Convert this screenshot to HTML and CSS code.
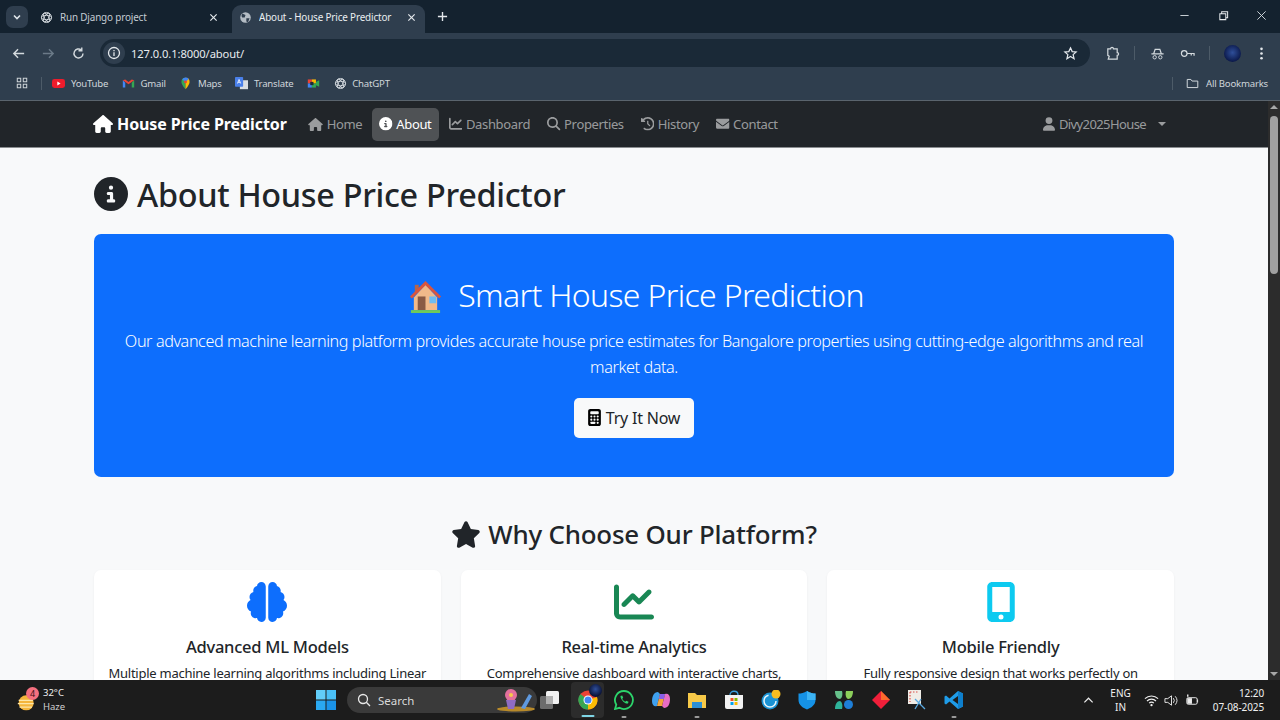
FILE: index.html
```html
<!DOCTYPE html>
<html lang="en">
<head>
<meta charset="utf-8">
<title>About - House Price Predictor</title>
<link rel="stylesheet" href="styles.css">
</head>
<body>
<svg class="sprite" aria-hidden="true">
<symbol id="i-house" viewBox="0 0 576 512"><path d="M575.8 255.5c0 18-15 32.1-32 32.1h-32l.7 160.2c0 2.7-.2 5.4-.5 8.1V472c0 22.1-17.9 40-40 40H456c-1.1 0-2.2 0-3.3-.1c-1.4 .1-2.8 .1-4.2 .1H416 392c-22.1 0-40-17.9-40-40V448 384c0-17.7-14.3-32-32-32H256c-17.7 0-32 14.3-32 32v64 24c0 22.1-17.9 40-40 40H160 128.1c-1.5 0-3-.1-4.5-.2c-1.2 .1-2.4 .2-3.6 .2H104c-22.1 0-40-17.9-40-40V360c0-.9 0-1.9 .1-2.8V287.6H32c-18 0-32-14-32-32.1c0-9 3-17 10-24L266.4 8c7-7 15-8 22-8s15 2 21 7L564.8 231.5c8 7 12 15 11 24z"/></symbol>
<symbol id="i-info" viewBox="0 0 512 512"><path d="M256 512A256 256 0 1 0 256 0a256 256 0 1 0 0 512zM216 336h24V272H216c-13.3 0-24-10.7-24-24s10.7-24 24-24h48c13.3 0 24 10.7 24 24v88h8c13.3 0 24 10.7 24 24s-10.7 24-24 24H216c-13.3 0-24-10.7-24-24s10.7-24 24-24zm40-208a32 32 0 1 1 0 64 32 32 0 1 1 0-64z"/></symbol>
<symbol id="i-chart" viewBox="0 0 512 512"><path d="M64 64c0-17.7-14.3-32-32-32S0 46.3 0 64V400c0 44.2 35.8 80 80 80H480c17.7 0 32-14.3 32-32s-14.3-32-32-32H80c-8.8 0-16-7.2-16-16V64zm406.6 86.6c12.5-12.5 12.5-32.8 0-45.3s-32.8-12.5-45.3 0L320 210.7l-57.4-57.4c-12.5-12.5-32.8-12.5-45.3 0l-112 112c-12.5 12.5-12.5 32.8 0 45.3s32.8 12.5 45.3 0L240 221.3l57.4 57.4c12.5 12.5 32.8 12.5 45.3 0l128-128z"/></symbol>
<symbol id="i-search" viewBox="0 0 512 512"><path d="M416 208c0 45.9-14.9 88.3-40 122.7L502.6 457.4c12.5 12.5 12.5 32.8 0 45.3s-32.8 12.5-45.3 0L330.7 376c-34.4 25.2-76.8 40-122.7 40C93.1 416 0 322.9 0 208S93.1 0 208 0S416 93.1 416 208zM208 352a144 144 0 1 0 0-288 144 144 0 1 0 0 288z"/></symbol>
<symbol id="i-history" viewBox="0 0 512 512"><path d="M75 75L41 41C25.9 25.9 0 36.6 0 57.9V168c0 13.3 10.7 24 24 24H134.1c21.4 0 32.1-25.9 17-41l-30.8-30.8C155 85.5 203 64 256 64c106 0 192 86 192 192s-86 192-192 192c-40.8 0-78.6-12.7-109.7-34.4c-14.5-10.1-34.4-6.6-44.6 7.9s-6.6 34.4 7.9 44.6C151.2 495 201.7 512 256 512c141.4 0 256-114.6 256-256S397.4 0 256 0C185.3 0 121.3 28.7 75 75zm181 53c-13.3 0-24 10.7-24 24V256c0 6.4 2.5 12.5 7 17l72 72c9.4 9.4 24.6 9.4 33.9 0s9.4-24.6 0-33.9l-65-65V152c0-13.3-10.7-24-24-24z"/></symbol>
<symbol id="i-mail" viewBox="0 0 512 512"><path d="M48 64C21.5 64 0 85.5 0 112c0 15.1 7.1 29.3 19.2 38.4L236.8 313.6c11.4 8.5 27 8.5 38.4 0L492.8 150.4c12.1-9.1 19.2-23.3 19.2-38.4c0-26.5-21.5-48-48-48H48zM0 176V384c0 35.3 28.7 64 64 64H448c35.3 0 64-28.7 64-64V176L294.4 339.2c-22.8 17.1-53.9 17.1-76.8 0L0 176z"/></symbol>
<symbol id="i-user" viewBox="0 0 448 512"><path d="M224 256A128 128 0 1 0 224 0a128 128 0 1 0 0 256zm-45.7 48C79.8 304 0 383.8 0 482.3C0 498.7 13.3 512 29.7 512H418.3c16.4 0 29.7-13.3 29.7-29.7C448 383.8 368.2 304 269.7 304H178.3z"/></symbol>
<symbol id="i-star" viewBox="0 0 576 512"><path d="M316.9 18C311.6 7 300.4 0 288.1 0s-23.4 7-28.8 18L195 150.3 51.4 171.5c-12 1.8-22 10.2-25.7 21.7s-.7 24.2 7.9 32.7L137.8 329 113.2 474.7c-2 12 3 24.2 12.9 31.3s23 8 33.8 2.3l128.3-68.5 128.3 68.5c10.8 5.7 23.9 4.9 33.8-2.3s14.9-19.3 12.9-31.3L438.5 329 542.7 225.9c8.6-8.5 11.7-21.2 7.9-32.7s-13.7-19.9-25.7-21.7L381.2 150.3 316.9 18z"/></symbol>
<symbol id="i-calc" viewBox="0 0 384 512"><path d="M64 0C28.7 0 0 28.7 0 64V448c0 35.3 28.7 64 64 64H320c35.3 0 64-28.7 64-64V64c0-35.3-28.7-64-64-64H64zM96 64H288c17.7 0 32 14.3 32 32v32c0 17.7-14.3 32-32 32H96c-17.7 0-32-14.3-32-32V96c0-17.7 14.3-32 32-32zm32 160a32 32 0 1 1 -64 0 32 32 0 1 1 64 0zM96 352a32 32 0 1 1 0-64 32 32 0 1 1 0 64zM64 416c0-17.7 14.3-32 32-32h96c17.7 0 32 14.3 32 32s-14.3 32-32 32H96c-17.7 0-32-14.3-32-32zM192 256a32 32 0 1 1 0-64 32 32 0 1 1 0 64zm32 64a32 32 0 1 1 -64 0 32 32 0 1 1 64 0zm64-64a32 32 0 1 1 0-64 32 32 0 1 1 0 64zm32 64a32 32 0 1 1 -64 0 32 32 0 1 1 64 0zM288 448a32 32 0 1 1 0-64 32 32 0 1 1 0 64z"/></symbol>
<symbol id="i-brain" viewBox="0 0 512 512"><path d="M184 0c30.9 0 56 25.1 56 56V456c0 30.9-25.1 56-56 56c-28.9 0-52.7-21.9-55.7-50.1c-5.2 1.4-10.7 2.1-16.3 2.1c-35.3 0-64-28.7-64-64c0-7.4 1.3-14.6 3.6-21.2C21.4 367.4 0 338.2 0 304c0-31.9 18.7-59.5 45.8-72.3C37.1 220.8 32 207 32 192c0-30.7 21.6-56.3 50.4-62.6C80.8 123.9 80 118 80 112c0-29.9 20.6-55.1 48.3-62.1C131.3 21.9 155.1 0 184 0zM328 0c28.9 0 52.6 21.9 55.7 49.9c27.8 7 48.3 32.1 48.3 62.1c0 6-.8 11.9-2.4 17.4c28.8 6.2 50.4 31.9 50.4 62.6c0 15-5.1 28.8-13.8 39.7C493.3 244.5 512 272.1 512 304c0 34.2-21.4 63.4-51.6 74.8c2.3 6.6 3.6 13.8 3.6 21.2c0 35.3-28.7 64-64 64c-5.6 0-11.1-.7-16.3-2.1c-3 28.2-26.8 50.1-55.7 50.1c-30.9 0-56-25.1-56-56V56c0-30.9 25.1-56 56-56z"/></symbol>
<symbol id="i-mobile" viewBox="0 0 384 512"><path d="M16 64C16 28.7 44.7 0 80 0H304c35.3 0 64 28.7 64 64V448c0 35.3-28.7 64-64 64H80c-35.3 0-64-28.7-64-64V64zM224 448a32 32 0 1 0 -64 0 32 32 0 1 0 64 0zM304 64H80V384H304V64z"/></symbol>
<symbol id="i-gpt" viewBox="0 0 16 16"><g fill="none" stroke="currentColor" stroke-width="1.1"><circle cx="8" cy="8" r="6.2"/><ellipse cx="8" cy="8" rx="6.2" ry="2.6" transform="rotate(60 8 8)"/><ellipse cx="8" cy="8" rx="6.2" ry="2.6" transform="rotate(-60 8 8)"/><ellipse cx="8" cy="8" rx="6.2" ry="2.6"/></g></symbol>
</svg>

<div class="browser">
  <div class="tabstrip">
    <div class="tab-search"><svg class="ic10" viewBox="0 0 10 10"><path d="M2 3.500 5 6.500 8 3.500" fill="none" stroke="#dfe5ea" stroke-width="1.600"/></svg></div>
    <div class="tab tab-first">
      <svg class="fav"><use href="#i-gpt"/></svg>
      <span class="tab-title">Run Django project</span>
      <svg class="close" viewBox="0 0 10 10"><path d="M1.500 1.500 8.500 8.500M8.500 1.500 1.500 8.500" stroke="currentColor" stroke-width="1.300"/></svg>
    </div>
    <div class="tab tab-active">
      <svg class="fav" viewBox="0 0 16 16"><circle cx="8" cy="8" r="6.500" fill="#b4bcc4"/><path d="M4 3 8 5 7 8 4 8 3 6ZM9 9 13 9 11 14 9 13Z" fill="#2f3e4e"/></svg>
      <span class="tab-title">About - House Price Predictor</span>
      <svg class="close" viewBox="0 0 10 10"><path d="M1.500 1.500 8.500 8.500M8.500 1.500 1.500 8.500" stroke="currentColor" stroke-width="1.300"/></svg>
    </div>
    <svg class="plus" viewBox="0 0 12 12"><path d="M6 1V11M1 6H11" stroke="#e4e8ec" stroke-width="1.500"/></svg>
    <div class="winctl">
      <svg viewBox="0 0 12 12"><path d="M1.500 6H10.500" stroke="#d8dde2"/></svg>
      <svg viewBox="0 0 12 12"><path d="M2 4H8.500V10.500H2ZM4 4V2H10.500V8.500H8.500" fill="none" stroke="#e8ecef" stroke-width="1.100"/></svg>
      <svg viewBox="0 0 12 12"><path d="M1.500 1.500 10.500 10.500M10.500 1.500 1.500 10.500" stroke="#d8dde2"/></svg>
    </div>
  </div>
  <div class="toolbar">
    <div class="navrow">
      <svg class="tb" viewBox="0 0 16 16"><path d="M14 8H3M7.500 3.500 3 8 7.500 12.500" fill="none" stroke="#d4dade" stroke-width="1.500"/></svg>
      <svg class="tb" viewBox="0 0 16 16"><path d="M2 8H13M8.500 3.500 13 8 8.500 12.500" fill="none" stroke="#6b7a88" stroke-width="1.500"/></svg>
      <svg class="tb" viewBox="0 0 16 16"><path d="M12.800 8A4.800 4.800 0 1 1 11 4.200M11.500 1.500V5H8" fill="none" stroke="#d4dade" stroke-width="1.500"/></svg>
      <div class="omnibox">
        <span class="omni-info"><svg class="ic14" viewBox="0 0 14 14"><circle cx="7" cy="7" r="5.500" fill="none" stroke="#e4e8ec" stroke-width="1.300"/><path d="M7 6.200V10M7 4V5.200" stroke="#e4e8ec" stroke-width="1.300"/></svg></span>
        <span class="url">127.0.0.1:8000/about/</span>
        <svg class="omni-star" viewBox="0 0 16 16"><path d="M8 2 9.800 6 14 6.400 10.800 9.200 11.800 13.500 8 11.200 4.200 13.500 5.200 9.200 2 6.400 6.200 6Z" fill="none" stroke="#e4e8ec" stroke-width="1.300"/></svg>
      </div>
      <svg class="tb" viewBox="0 0 16 16"><path d="M3 3H6C6 1 9 1 9 3H13V7C15 7 15 10 13 10V14H3.500L4.500 11 3 10V7Z" fill="none" stroke="#d4dade" stroke-width="1.300"/></svg>
      <span class="tb-sep"></span>
      <svg class="tb" viewBox="0 0 16 16"><path d="M1.500 8.500H14.500M4 8 5.500 3.500H10.500L12 8" fill="none" stroke="#d4dade" stroke-width="1.300"/><circle cx="5" cy="12" r="1.800" fill="none" stroke="#d4dade"/><circle cx="11" cy="12" r="1.800" fill="none" stroke="#d4dade"/></svg>
      <svg class="tb" viewBox="0 0 16 16"><circle cx="4.500" cy="8" r="3" fill="none" stroke="#d4dade" stroke-width="1.300"/><path d="M7.500 8H15V10.500M12 8V10" fill="none" stroke="#d4dade" stroke-width="1.300"/></svg>
      <span class="tb-sep"></span>
      <span class="avatar"></span>
      <svg class="tb" viewBox="0 0 16 16"><g fill="#e4e8ec"><circle cx="8" cy="3" r="1.400"/><circle cx="8" cy="8" r="1.400"/><circle cx="8" cy="13" r="1.400"/></g></svg>
    </div>
    <div class="bookmarks">
      <svg class="apps" viewBox="0 0 14 14"><path d="M1.500 1.500H5.500V5.500H1.500ZM8.500 1.500H12.500V5.500H8.500ZM1.500 8.500H5.500V12.500H1.500ZM8.500 8.500H12.500V12.500H8.500Z" fill="none" stroke="#cdd3d8" stroke-width="1.200"/></svg>
      <span class="bm-sep"></span>
      <span class="bm"><svg class="bm-ic" viewBox="0 0 16 16"><rect y="2.500" width="16" height="11" rx="3" fill="#ee1c2c"/><path d="M6.500 5.500 10.500 8 6.500 10.500Z" fill="#fff"/></svg>YouTube</span>
      <span class="bm"><svg class="bm-ic" viewBox="0 0 16 16"><path d="M1 4V13H4V7Z" fill="#4285f4"/><path d="M15 4V13H12V7Z" fill="#34a853"/><path d="M1 4 8 9 15 4 12 3 8 6 4 3Z" fill="#ea4335"/></svg>Gmail</span>
      <span class="bm"><svg class="bm-ic" viewBox="0 0 16 16"><path d="M8 1A5 5 0 0 0 3 6C3 9.500 8 15 8 15Z" fill="#34a853"/><path d="M8 1A5 5 0 0 1 13 6C13 9.500 8 15 8 15Z" fill="#fbbc04"/><path d="M4 3A5 5 0 0 1 12 2.500L8 6Z" fill="#4285f4"/><circle cx="8" cy="6" r="1.800" fill="#ea4335"/></svg>Maps</span>
      <span class="bm"><svg class="bm-ic" viewBox="0 0 16 16"><rect x="6" y="4" width="10" height="11" fill="#d9dde2"/><rect width="10" height="12" rx="1" fill="#4a80ea"/><path d="M3 8 5 3 7 8M3.800 6.500H6.200" fill="none" stroke="#fff"/></svg>Translate</span>
      <span class="bm"><svg class="bm-ic" viewBox="0 0 16 16"><rect x="1" y="3" width="5" height="5" fill="#ea4335"/><rect x="6" y="3" width="5" height="5" fill="#fbbc04"/><rect x="1" y="8" width="5" height="5" fill="#4285f4"/><rect x="6" y="8" width="5" height="5" fill="#34a853"/><rect x="4" y="6" width="4" height="4" fill="#1d2a36"/><path d="M11 6 15 4V12L11 10Z" fill="#34a853"/></svg></span>
      <span class="bm"><svg class="bm-ic gpt"><use href="#i-gpt"/></svg>ChatGPT</span>
      <span class="bm-end"><span class="bm-sep"></span><svg class="bm-ic" viewBox="0 0 16 16"><path d="M1.500 3H6L7.500 5H14.500V13H1.500Z" fill="none" stroke="#d4dade" stroke-width="1.200"/></svg>All Bookmarks</span>
    </div>
  </div>

  <div class="viewport">
    <div class="page">
      <nav class="navbar">
        <a class="brand"><svg class="brand-ic"><use href="#i-house"/></svg>House Price Predictor</a>
        <ul class="navlinks">
          <li class="navlink"><svg class="ni"><use href="#i-house"/></svg>Home</li>
          <li class="navlink is-active"><svg class="ni ni-sq"><use href="#i-info"/></svg>About</li>
          <li class="navlink"><svg class="ni ni-sq"><use href="#i-chart"/></svg>Dashboard</li>
          <li class="navlink"><svg class="ni ni-sq"><use href="#i-search"/></svg>Properties</li>
          <li class="navlink"><svg class="ni ni-sq"><use href="#i-history"/></svg>History</li>
          <li class="navlink"><svg class="ni ni-sq"><use href="#i-mail"/></svg>Contact</li>
        </ul>
        <div class="navuser"><svg class="ni ni-user"><use href="#i-user"/></svg>Divy2025House<span class="caret"></span></div>
      </nav>
      <main class="content">
        <h1 class="title"><svg class="title-ic"><use href="#i-info"/></svg>About House Price Predictor</h1>
        <section class="hero">
          <h2 class="hero-title"><svg class="emoji" viewBox="0 0 36 36"><path d="M7 7H11V15H7Z" fill="#b5654a"/><path d="M6 20 18 7 30 20V33H6Z" fill="#f1b98a"/><path d="M2 19 18 3 34 19 32 21 18 7.500 4 21Z" fill="#d9553f"/><path d="M10 19H18V33H10Z" fill="#8a5a44"/><path d="M22 19H29V26H22Z" fill="#6dbcf2"/><path d="M3 33H33V36H3Z" fill="#6fca5a"/></svg>Smart House Price Prediction</h2>
          <p class="hero-text">Our advanced machine learning platform provides accurate house price estimates for Bangalore properties using cutting-edge algorithms and real market data.</p>
          <a class="hero-btn"><svg class="btn-ic"><use href="#i-calc"/></svg>Try It Now</a>
        </section>
        <h2 class="why"><svg class="why-ic"><use href="#i-star"/></svg>Why Choose Our Platform?</h2>
        <div class="cards">
          <article class="card"><svg class="card-ic blue"><use href="#i-brain"/></svg><h3 class="card-title">Advanced ML Models</h3><p class="card-text">Multiple machine learning algorithms including Linear</p></article>
          <article class="card"><svg class="card-ic green"><use href="#i-chart"/></svg><h3 class="card-title">Real-time Analytics</h3><p class="card-text">Comprehensive dashboard with interactive charts,</p></article>
          <article class="card"><svg class="card-ic cyan"><use href="#i-mobile"/></svg><h3 class="card-title">Mobile Friendly</h3><p class="card-text">Fully responsive design that works perfectly on</p></article>
        </div>
      </main>
    </div>
    <div class="scrollbar">
      <span class="sb-up"></span>
      <span class="sb-thumb"></span>
      <span class="sb-down"></span>
    </div>
  </div>

  <footer class="taskbar">
    <div class="weather">
      <span class="w-ic"><svg viewBox="0 0 24 24" class="w-sun"><circle cx="11" cy="13" r="9" fill="#f5b53a"/><path d="M2 10H19M1 14H20M3 18H18" stroke="#fde6a8" stroke-width="1.500"/></svg><span class="w-badge">4</span></span>
      <span class="w-text"><span>32°C</span><span class="w-sub">Haze</span></span>
    </div>
    <div class="tb-center">
      <svg class="tk" viewBox="0 0 20 20"><rect x="0" y="0" width="9.500" height="9.500" fill="#62cdf9"/><rect x="10.500" y="0" width="9.500" height="9.500" fill="#4ac0f7"/><rect x="0" y="10.500" width="9.500" height="9.500" fill="#2aa8f0"/><rect x="10.500" y="10.500" width="9.500" height="9.500" fill="#1a93e8"/></svg>
      <div class="tk-search">
        <svg class="ic14" viewBox="0 0 14 14"><circle cx="6" cy="6" r="4.500" fill="none" stroke="#e8e8e8" stroke-width="1.300"/><path d="M9.300 9.300 13 13" stroke="#e8e8e8" stroke-width="1.300"/></svg>
        <span>Search</span>
        <svg class="tk-art" viewBox="0 0 38 24"><ellipse cx="19" cy="21" rx="19" ry="2.500" fill="#b88a2a"/><circle cx="14" cy="7" r="6" fill="#e36f9c"/><circle cx="14" cy="7" r="2" fill="#f7c94a"/><path d="M9 12H19L17 21H11Z" fill="#8f6cc4"/><path d="M24 20 32 6 35 8 28 21Z" fill="#5f9ae0"/></svg>
      </div>
      <svg class="tk tk-view" viewBox="0 0 20 20"><rect x="0" y="6" width="13" height="13" rx="1.500" fill="#6c6c6c"/><rect x="6" y="1" width="13" height="13" rx="1.500" fill="#f1f1f1"/><rect x="6" y="6" width="7" height="8" fill="#b0b0b0"/></svg>
      <span class="tk-slot is-open">
        <svg class="tk" viewBox="0 0 20 20"><circle cx="10" cy="10" r="9.500" fill="#ea4335"/><path d="M10 10 1.800 15A9.500 9.500 0 0 1 2.500 4Z" fill="#34a853"/><path d="M10 10V19.500A9.500 9.500 0 0 1 1.800 15Z" fill="#34a853"/><path d="M10 10 19 7A9.500 9.500 0 0 1 10 19.500Z" fill="#fbbc04"/><circle cx="10" cy="10" r="4.500" fill="#fff"/><circle cx="10" cy="10" r="3.500" fill="#4285f4"/></svg>
        <span class="tk-avatar"></span>
      </span>
      <span class="tk-slot has-dot"><svg class="tk" viewBox="0 0 20 20"><path d="M10 1A9 9 0 0 0 2.300 14.700L1 19 5.400 17.800A9 9 0 1 0 10 1Z" fill="none" stroke="#2cd46b" stroke-width="1.800"/><path d="M6.500 6C6 9 11 14.500 14 13.500L14.500 11.800 12.300 10.700 11.300 11.800C10 11.200 8.800 10 8.200 8.700L9.200 7.700 8.200 5.500Z" fill="#2cd46b"/></svg></span>
      <span class="tk-slot"><svg class="tk" viewBox="0 0 20 20"><path d="M7 2C3 2 1 6 1 11C1 15 3 17 6 16L9 4Z" fill="#3fa0ee"/><path d="M13 18C17 18 19 14 19 9C19 5 17 3 14 4L11 16Z" fill="#e86cc4"/><path d="M6 16 9 4 14 4 11 16Z" fill="#f3a33a"/><path d="M9 4 14 4 13 9 8 9Z" fill="#8a5de8"/></svg></span>
      <span class="tk-slot has-dot"><svg class="tk" viewBox="0 0 20 20"><path d="M1 3H8L10 5H19V18H1Z" fill="#f7c948"/><rect x="5" y="12" width="10" height="6" fill="#2c8fd6"/></svg></span>
      <span class="tk-slot"><svg class="tk" viewBox="0 0 20 20"><path d="M1 5H19V17A2 2 0 0 1 17 19H3A2 2 0 0 1 1 17Z" fill="#f2f2f2"/><path d="M6 5C6 0 14 0 14 5" fill="none" stroke="#3aa0e0" stroke-width="1.300"/><rect x="6.500" y="8" width="3" height="3" fill="#f25022"/><rect x="10.500" y="8" width="3" height="3" fill="#7fba00"/><rect x="6.500" y="12" width="3" height="3" fill="#00a4ef"/><rect x="10.500" y="12" width="3" height="3" fill="#ffb900"/></svg></span>
      <span class="tk-slot"><svg class="tk" viewBox="0 0 20 20"><circle cx="9" cy="11" r="8.500" fill="#1b93d4"/><circle cx="9" cy="11" r="6" fill="none" stroke="#e8f6fd" stroke-width="1.500" stroke-dasharray="26 12"/><circle cx="15" cy="4" r="4.500" fill="#f5bd1f"/></svg></span>
      <span class="tk-slot"><svg class="tk" viewBox="0 0 20 20"><path d="M10 1C7 3 4 3.500 1.500 3.500V10C1.500 15 6 18 10 19.500C14 18 18.500 15 18.500 10V3.500C16 3.500 13 3 10 1Z" fill="#1592e6"/><path d="M10 1V10H18.500V3.500C16 3.500 13 3 10 1Z" fill="#3cb4f5"/></svg></span>
      <span class="tk-slot"><svg class="tk" viewBox="0 0 20 20"><path d="M1 1H8C9 5 8 8 6 9 3 9 1 6 1 1Z" fill="#66c08a"/><path d="M19 1H12C11 5 12 8 14 9 17 9 19 6 19 1Z" fill="#8ccf5b"/><path d="M1 19H8C9 15 8 12 6 11 3 11 1 14 1 19Z" fill="#2fb39a"/><circle cx="14.500" cy="14.500" r="4.500" fill="#1e7fd8"/></svg></span>
      <span class="tk-slot"><svg class="tk" viewBox="0 0 20 20"><path d="M10 1 19 10 10 19 1 10Z" fill="#f01f3a"/><path d="M10 1 19 10 10 10Z" fill="#fb6a2c"/></svg></span>
      <span class="tk-slot"><svg class="tk" viewBox="0 0 20 20"><rect x="1" y="0" width="13" height="14" fill="#f0ece6"/><path d="M3 2H12M3 2V12" stroke="#d9534f" stroke-width="1.200" stroke-dasharray="1.500 1.500"/><path d="M8 9 18 19M14 9 8 19" stroke="#58a8e0" stroke-width="1.300"/></svg></span>
      <span class="tk-slot has-dot"><svg class="tk" viewBox="0 0 20 20"><path d="M14 1 19 3.500V16.500L14 19 5.500 11.500 2 14.500 0.500 13.500V6.500L2 5.500 5.500 8.500Z" fill="#1f9ce8"/><path d="M14 6 8.500 10 14 14Z" fill="#1c1c1c"/><path d="M14 1 19 3.500V16.500L14 19Z" fill="#0e7fcc"/></svg></span>
    </div>
    <div class="tray">
      <svg class="tr-chev" viewBox="0 0 12 12"><path d="M1.500 8 6 3.500 10.500 8" fill="none" stroke="#ececec" stroke-width="1.300"/></svg>
      <span class="lang"><span>ENG</span><span>IN</span></span>
      <svg class="tr-ic" viewBox="0 0 16 16"><path d="M1 6A10 10 0 0 1 15 6M3.200 8.500A7 7 0 0 1 12.800 8.500M5.500 10.800A3.500 3.500 0 0 1 10.500 10.800" fill="none" stroke="#f0f0f0" stroke-width="1.200"/><circle cx="8" cy="13" r="1.200" fill="#f0f0f0"/></svg>
      <svg class="tr-ic" viewBox="0 0 16 16"><path d="M1 6H4L8 3V13L4 10H1Z" fill="none" stroke="#ececec"/><path d="M10 5.500A4 4 0 0 1 10 10.500M12 3.500A7 7 0 0 1 12 12.500" fill="none" stroke="#ececec"/></svg>
      <svg class="tr-ic" viewBox="0 0 16 16"><rect x="3" y="5" width="11" height="7" rx="1.500" fill="none" stroke="#ececec"/><rect x="3.500" y="5.500" width="5" height="6" fill="#ececec"/><path d="M14.500 7V10" stroke="#ececec"/><path d="M4 1.500V4" stroke="#ececec" stroke-width="1.500"/></svg>
      <span class="clock"><span>12:20</span><span>07-08-2025</span></span>
    </div>
  </footer>
</div>
</body>
</html>
```
FILE: styles.css
```css
* { box-sizing: border-box; }
html, body { margin: 0; height: 100%; overflow: hidden; }
body { font-family: "Noto Sans", "Open Sans", "Liberation Sans", sans-serif; color: #212529; background: #1c1c1c; }
a { text-decoration: none; color: inherit; }
h1, h2, h3, p, ul { margin: 0; padding: 0; list-style: none; }
svg { display: block; flex: none; fill: currentColor; }
.sprite { width: 0; height: 0; position: absolute; }

.browser { height: 720px; display: flex; flex-direction: column; }
.ic10 { width: 10px; height: 10px; }
.ic14 { width: 14px; height: 14px; }

.tabstrip { height: 33px; background: #14222f; display: flex; align-items: flex-end; padding-left: 6px; color: #dfe5ea; flex: none; }
.tab-search { width: 22px; height: 22px; margin-bottom: 5px; background: #2f3e4e; border-radius: 7px; display: flex; align-items: center; justify-content: center; }
.tab { width: 193px; height: 28px; display: flex; align-items: center; padding: 0 9px 4px 7px; border-radius: 9px 9px 0 0; font-size: 9.900px; letter-spacing: -.15px; color: #c4ccd3; }
.tab-first { margin-left: 6px; width: 198px; padding: 0 14px 4px 6px; }
.tab-active { background: #2f3e4e; color: #eaeef1; }
.fav { width: 13px; height: 13px; margin-right: 7px; color: #d7dce1; }
.tab-title { flex: 1; white-space: nowrap; overflow: hidden; }
.close { width: 9px; height: 9px; color: #e4e8ec; }
.plus { width: 11px; height: 11px; margin: 0 0 11px 11.500px; }
.winctl { margin-left: auto; display: flex; gap: 27.500px; padding-right: 13px; align-self: stretch; align-items: center; margin-top: -2px; }
.winctl svg { width: 11px; height: 11px; }

.toolbar { height: 68px; background: #2f3e4e; border-bottom: 1px solid #5a646d; flex: none; }
.navrow { height: 34px; display: flex; align-items: center; padding: 6px 0 0 11px; gap: 15px; }
.tb { width: 15px; height: 15px; }
.omnibox { width: 990px; height: 28px; margin-left: -1px; background: #1a2937; border-radius: 14px; display: flex; align-items: center; padding: 0 12px 0 3px; color: #e8ecef; font-size: 11.200px; flex: none; }
.omni-info { width: 22px; height: 22px; background: #2f3e4e; border-radius: 50%; display: flex; align-items: center; justify-content: center; }
.url { margin-left: 6px; flex: 1; letter-spacing: -.1px; }
.omni-star { width: 15px; height: 15px; }
.tb-sep { width: 1px; height: 14px; background: #4d5b68; margin-left: -1px; }
.avatar { width: 17px; height: 17px; border-radius: 50%; background: radial-gradient(circle at 50% 45%, #2f4f9a, #0c1a4c 70%); margin: 0 -2px 0 -1px; }

.bookmarks { height: 33px; padding: 0 12px 1px 16px; display: flex; align-items: center; font-size: 9.600px; letter-spacing: -.2px; color: #d0d6db; gap: 13.700px; }
.apps { width: 12px; height: 12px; }
.apps + .bm-sep { margin-left: -1px; margin-right: -3px; }
.bm-sep { width: 1px; height: 13px; background: #4d5b68; }
.bm { display: flex; align-items: center; gap: 5.500px; white-space: nowrap; }
.bm-ic { width: 13px; height: 13px; }
.gpt { color: #d7dce1; }
.bm-end { margin-left: auto; display: flex; align-items: center; gap: 7px; }
.bm-end .bm-sep { margin-right: 6px; }

.viewport { flex: 1; display: flex; min-height: 0; background: #f8f9fa; }
.page { flex: 1; min-width: 0; overflow: hidden; }

.navbar { height: 47px; background: #212529; border-bottom: 1px solid #8a8d90; display: flex; align-items: center; padding: 0 94px 0 93px; color: rgba(255, 255, 255, .55); font-size: 13px; letter-spacing: -.35px; }
.brand { display: flex; align-items: center; font-size: 16px; font-weight: 700; color: #fff; margin-right: 14px; white-space: nowrap; letter-spacing: -.1px; }
.brand-ic { width: 20px; height: 18px; margin-right: 4px; color: #fff; }
.navlinks { display: flex; align-items: center; }
.navlink { display: flex; align-items: center; height: 33px; padding: 0 7px; margin-right: 3px; border-radius: 5px; white-space: nowrap; }
.is-active { background: #4f5255; color: #fff; padding: 0 7.500px 0 7px; }
.ni { width: 15px; height: 13px; margin-right: 4px; }
.ni-sq { width: 13.500px; height: 13.500px; margin-right: 3.500px; }
.ni-user { width: 12px; height: 14px; margin-right: 4px; }
.navuser { margin-left: auto; display: flex; align-items: center; white-space: nowrap; margin-right: 8px; letter-spacing: -.6px; }
.caret { width: 0; height: 0; margin-left: 12px; border: 4.500px solid transparent; border-top-color: currentColor; border-bottom: 0; }

.content { padding: 26px 94px 0; }
.title { display: flex; align-items: center; font-size: 32.400px; font-weight: 500; line-height: 40px; margin-bottom: 20px; letter-spacing: -.3px; }
.title-ic { width: 34px; height: 34px; margin-right: 9px; }
.hero { height: 243px; background: #0d6efd; border-radius: 7px; color: #fff; text-align: center; padding: 39px 24px 0; margin-bottom: 39px; }
.hero-title { display: flex; align-items: center; justify-content: center; padding-left: 4px; font-size: 32px; font-weight: 300; line-height: 44px; letter-spacing: -.65px; }
.emoji { width: 35px; height: 35px; margin-right: 15px; }
.hero-text { font-size: 16.200px; font-weight: 300; line-height: 26px; margin-top: 11px; letter-spacing: -.41px; }
.hero-btn { display: inline-flex; align-items: center; height: 39.500px; padding: 0 13.500px; margin-top: 18px; background: #f8f9fa; color: #212529; border-radius: 5px; font-size: 16px; letter-spacing: -.2px; }
.btn-ic { width: 13px; height: 17px; margin-right: 5px; color: #000; }

.why { display: flex; align-items: center; justify-content: center; font-size: 25.900px; font-weight: 500; line-height: 36px; margin-bottom: 18px; letter-spacing: -.2px; }
.why-ic { width: 30px; height: 27px; margin-right: 7px; }
.cards { display: grid; grid-template-columns: repeat(3, minmax(0, 1fr)); gap: 20px; }
.card { background: #fff; border-radius: 7px; box-shadow: 0 1px 3px rgba(0, 0, 0, .05); text-align: center; padding: 12px 12px 20px; display: flex; flex-direction: column; align-items: center; }
.card-ic { width: 40px; height: 40px; }
.blue { color: #0d6efd; }
.green { color: #198754; }
.cyan { color: #0dcaf0; }
.card-title { font-size: 16.500px; font-weight: 500; line-height: 24px; margin-top: 13px; letter-spacing: -.25px; }
.card-text { font-size: 13px; line-height: 20px; margin-top: 4px; white-space: nowrap; letter-spacing: -.25px; }

.scrollbar { width: 12px; background: #2c2c2c; display: flex; flex-direction: column; align-items: center; padding: 4px 0; }
.sb-up, .sb-down { width: 0; height: 0; border: 4.500px solid transparent; }
.sb-up { border-bottom-color: #a8a8a8; border-top: 0; }
.sb-down { border-top-color: #a8a8a8; border-bottom: 0; margin-top: auto; }
.sb-thumb { width: 8px; height: 158px; margin-top: 7px; background: #a0a0a0; border-radius: 4px; }

.taskbar { height: 40px; background: #1c1c1c; display: flex; align-items: center; color: #f0f0f0; font-size: 9.500px; flex: none; position: relative; }
.weather { display: flex; align-items: center; gap: 6px; padding-left: 17px; width: 316px; }
.w-ic { position: relative; width: 20px; height: 24px; display: block; }
.w-sun { width: 20px; height: 20px; margin-top: 4px; }
.w-badge { position: absolute; top: -1px; left: 9px; width: 13px; height: 13px; border-radius: 50%; background: #f4707f; color: #3a1116; font-size: 9px; line-height: 13px; text-align: center; }
.w-text { display: flex; flex-direction: column; line-height: 14px; }
.w-sub { color: #cfcfcf; }
.tb-center { display: flex; align-items: center; }
.tk { width: 20px; height: 20px; }
.tk-search { width: 190px; height: 26px; margin-left: 11px; border-radius: 13px; background: #3a3a3a; display: flex; align-items: center; padding: 0 2px 0 10px; gap: 7px; font-size: 11.500px; color: #d8d8d8; }
.tk-art { width: 38px; height: 24px; margin-left: auto; }
.tk-view { margin-left: 3px; }
.tk-slot { width: 36.700px; height: 40px; display: flex; align-items: center; justify-content: center; position: relative; }
.tk-slot.is-open { margin: 0 1.500px 0 11px; background: #2c2c2c; height: 36px; border-radius: 4px; width: 33px; }
.is-open::after, .has-dot::after { content: ""; position: absolute; bottom: 2px; left: 50%; transform: translateX(-50%); width: 5px; height: 2px; background: #9a9a9a; border-radius: 1px; }
.is-open::after { width: 13px; background: #7fd6e6; bottom: 1px; }
.tk-avatar { position: absolute; top: 2px; right: 2px; width: 13px; height: 13px; border-radius: 50%; background: radial-gradient(circle at 50% 40%, #2f4f9a, #0a1236 70%); }
.tray { margin-left: auto; display: flex; align-items: center; padding-right: 16px; font-size: 10px; }
.tr-chev { width: 11px; height: 11px; margin-right: 16.500px; }
.lang { display: flex; flex-direction: column; align-items: center; line-height: 14px; margin-right: 13.500px; }
.tr-ic { width: 15px; height: 15px; margin-right: 5px; }
.clock { display: flex; flex-direction: column; align-items: flex-end; line-height: 14px; margin-left: 8.500px; letter-spacing: -.1px; }
```
